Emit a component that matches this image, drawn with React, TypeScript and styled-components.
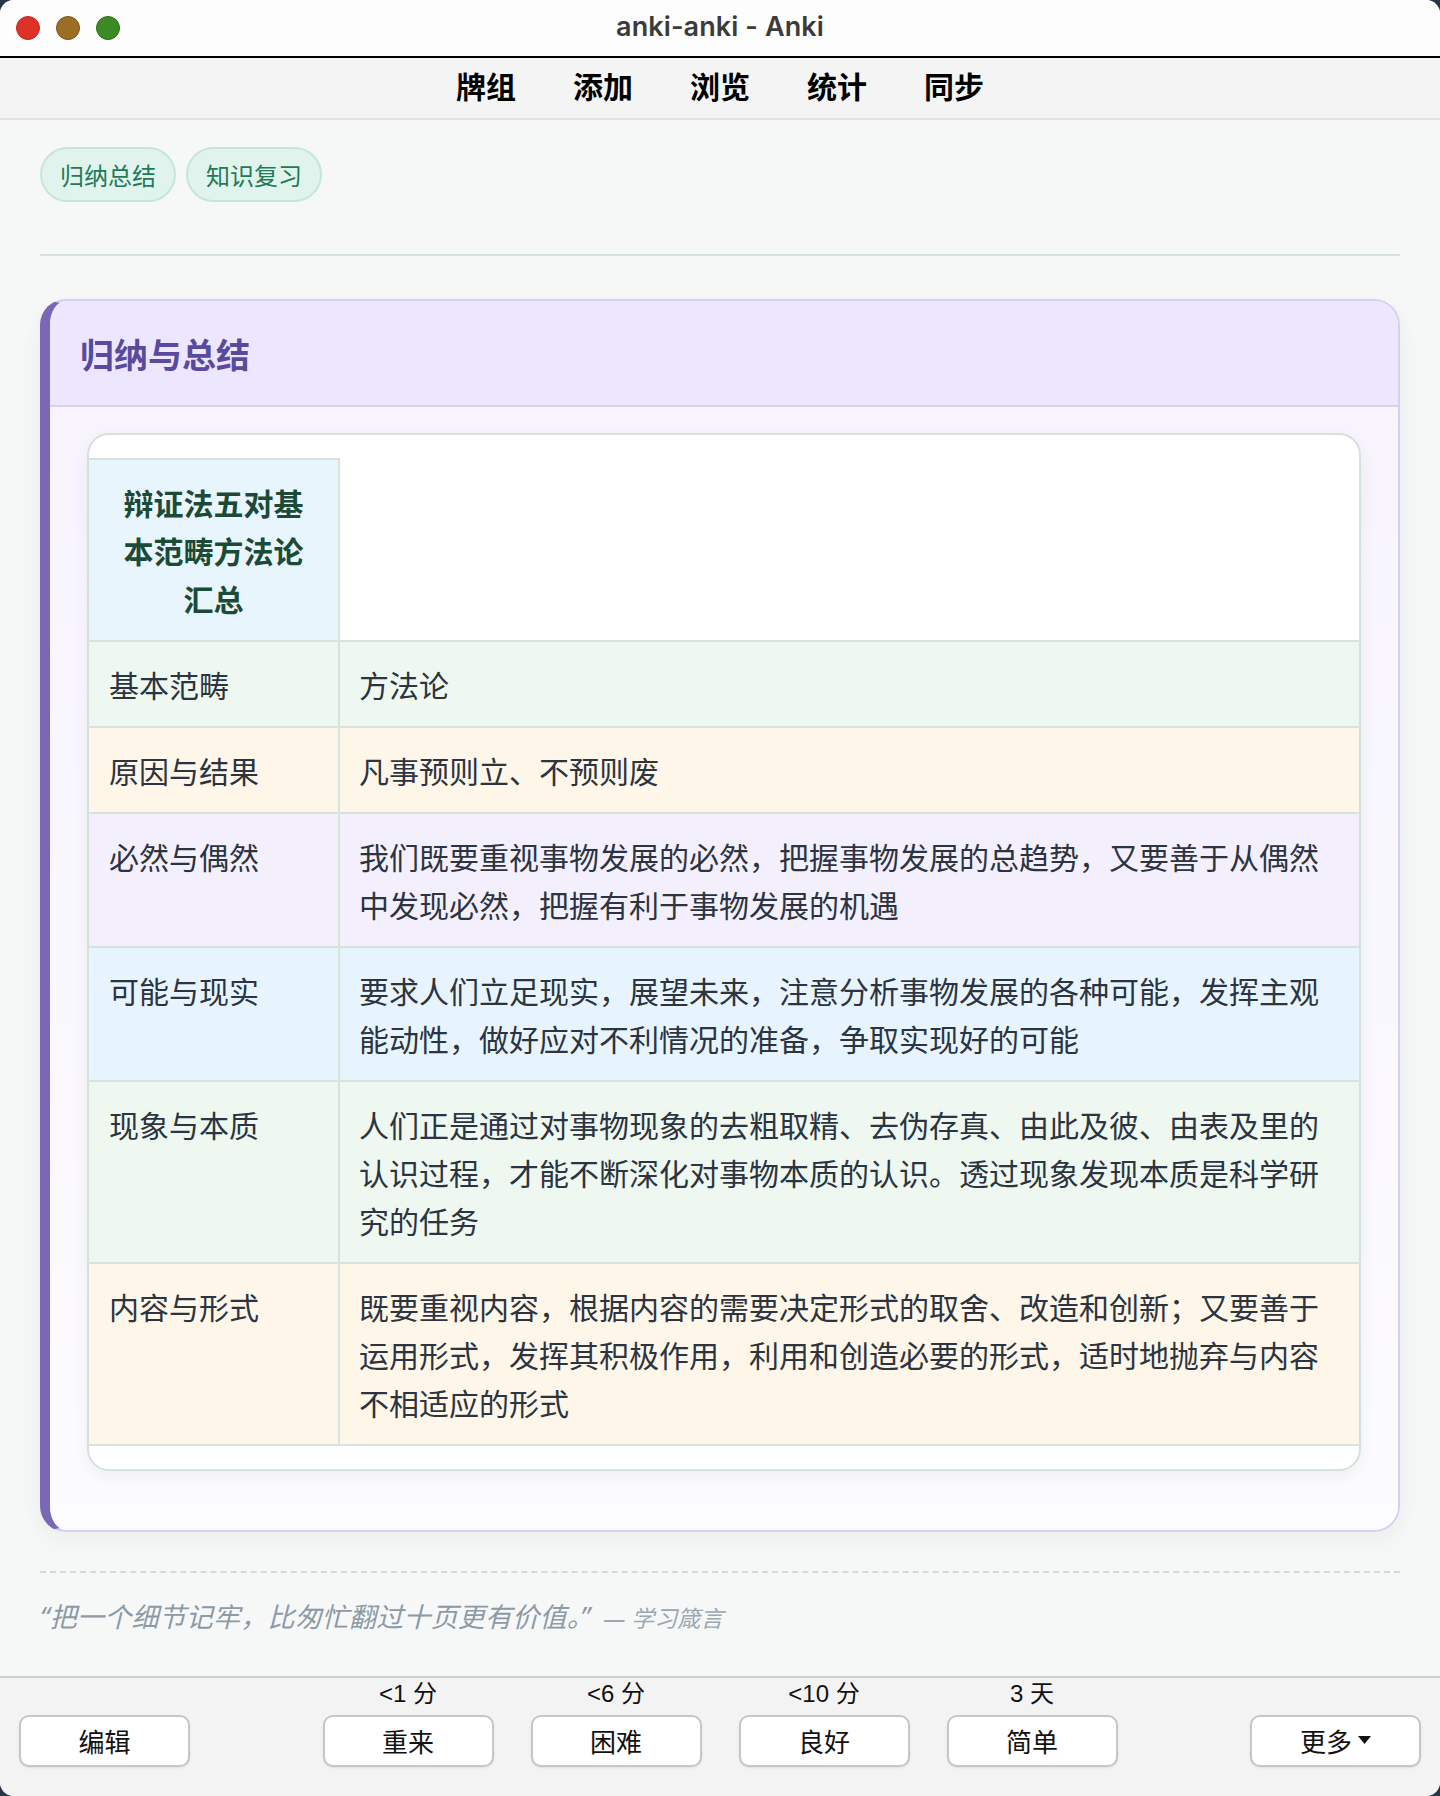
import React from "react";
import styled, { createGlobalStyle } from "styled-components";

const GlobalStyle = createGlobalStyle`
  html, body {
    margin: 0;
    padding: 0;
    background: #26364a;
  }
  body {
    font-family: "Noto Sans CJK SC", "Noto Sans", sans-serif;
  }
  * {
    box-sizing: border-box;
  }
`;

const Window = styled.div`
  width: 1440px;
  height: 1796px;
  display: flex;
  flex-direction: column;
  border-radius: 14px;
  overflow: hidden;
  background: #f6f8f7;
`;

const TitleBar = styled.div`
  height: 58px;
  padding-bottom: 3px;
  display: grid;
  grid-template-columns: 1fr auto 1fr;
  align-items: center;
  background: #fdfdfd;
  border-bottom: 2px solid #000;
`;

const Lights = styled.div`
  display: flex;
  gap: 16px;
  padding-left: 16px;
  padding-top: 3px;
`;

const Light = styled.span<{ $fill: string; $edge: string }>`
  width: 24px;
  height: 24px;
  border-radius: 50%;
  background: ${(p) => p.$fill};
  border: 1.5px solid ${(p) => p.$edge};
`;

const WindowTitle = styled.div`
  font-family: Inter, "Liberation Sans", sans-serif;
  font-weight: 600;
  font-size: 27px;
  color: #3b3b3b;
  letter-spacing: 0.1px;
`;

const NavBar = styled.nav`
  height: 62px;
  padding-bottom: 6px;
  display: flex;
  justify-content: center;
  align-items: center;
  gap: 57px;
  background: #f4f4f4;
  border-bottom: 2px solid #e2e2e2;
`;

const NavItem = styled.a`
  font-size: 30px;
  font-weight: 700;
  color: #000;
  text-decoration: none;
  line-height: 1;
`;

const Main = styled.main`
  flex: 1;
  padding: 27px 40px 0;
`;

const Tags = styled.div`
  display: flex;
  gap: 10px;
`;

const Tag = styled.span`
  height: 55px;
  padding: 0 18px;
  display: inline-flex;
  align-items: center;
  border-radius: 28px;
  border: 2px solid #c4e7d9;
  background: #e0f4ed;
  color: #1f7a57;
  font-size: 24px;
`;

const Divider = styled.hr`
  margin: 52px 0 0;
  border: none;
  height: 2px;
  background: #d6e2dd;
`;

const Card = styled.section`
  margin-top: 43px;
  border: 2px solid #d8cff0;
  border-left: 10px solid #7a68b6;
  border-radius: 26px;
  overflow: hidden;
  box-shadow: 0 8px 22px rgba(40, 40, 80, 0.05);
`;

const CardHeader = styled.header`
  height: 106px;
  display: flex;
  align-items: center;
  padding-left: 30px;
  background: #ece7fe;
  border-bottom: 2px solid #d8cff0;
`;

const CardTitle = styled.h2`
  margin: 0;
  font-size: 34px;
  font-weight: 700;
  color: #5a4a9d;
`;

const CardBody = styled.div`
  padding: 26px 37px 59px 37px;
  background: linear-gradient(180deg, #f7f4fe 0%, #fcfbff 100%);
`;

const TableBox = styled.div`
  background: #fff;
  border: 2px solid #d5e2dc;
  border-radius: 22px;
  padding: 23px 0;
  overflow: hidden;
  box-shadow: 0 6px 16px rgba(30, 50, 40, 0.06);
`;

const Table = styled.table`
  width: 100%;
  border-collapse: collapse;
  table-layout: fixed;
  font-size: 30px;
  line-height: 48px;
  color: #2b3440;
`;

const HeadCell = styled.th`
  padding: 18px 20px;
  background: #e8f5fd;
  color: #1b4a37;
  font-weight: 700;
  text-align: center;
  vertical-align: middle;
  border: 2px solid #d6e4dd;
  border-left: none;
`;

const Row = styled.tr<{ $bg: string }>`
  background: ${(p) => p.$bg};
`;

const Cell = styled.td`
  padding: 18px 20px;
  vertical-align: top;
  border: 2px solid #d6e4dd;
  &:first-child {
    border-left: none;
  }
  &:last-child {
    border-right: none;
    padding-left: 19px;
  }
`;

const Dashed = styled.div`
  margin-top: 39px;
  border-top: 2px dashed #d3dbd8;
`;

const Quote = styled.p`
  margin: 24px 0 0;
  font-family: "Noto Sans", "Noto Sans CJK SC", sans-serif;
  font-size: 27px;
  letter-spacing: 0.2px;
  line-height: 40px;
  font-style: italic;
  color: #8d9aa6;
`;

const Source = styled.span`
  margin-left: 13px;
  font-size: 23px;
  letter-spacing: 0;
  color: #9ba7b1;
`;

const BottomBar = styled.footer`
  height: 120px;
  display: grid;
  grid-template-columns: 1fr auto 1fr;
  align-items: end;
  padding: 0 19px 29px;
  background: #f3f3f3;
  border-top: 2px solid #cfcfcf;
`;

const Answers = styled.div`
  display: flex;
  gap: 37px;
`;

const Answer = styled.div`
  display: flex;
  flex-direction: column;
  align-items: center;
  gap: 6px;
`;

const Due = styled.span`
  font-family: "Liberation Sans", "Noto Sans CJK SC", sans-serif;
  font-size: 24px;
  line-height: 30px;
  color: #111;
`;

const Button = styled.button<{ $side?: "left" | "right" }>`
  width: 171px;
  height: 52px;
  justify-self: ${(p) => (p.$side === "right" ? "end" : "start")};
  display: inline-flex;
  align-items: center;
  justify-content: center;
  gap: 6px;
  background: #fff;
  border: 2px solid #c6c6c6;
  border-radius: 10px;
  box-shadow: 0 1px 2px rgba(0, 0, 0, 0.08);
  font-family: "Noto Sans CJK SC", sans-serif;
  font-size: 26px;
  color: #111;
  padding: 0 0 2px;
`;

const rows = [
  { k: "基本范畴", v: "方法论", bg: "#eef8f1" },
  { k: "原因与结果", v: "凡事预则立、不预则废", bg: "#fef6e8" },
  {
    k: "必然与偶然",
    v: "我们既要重视事物发展的必然，把握事物发展的总趋势，又要善于从偶然中发现必然，把握有利于事物发展的机遇",
    bg: "#f3effd",
  },
  {
    k: "可能与现实",
    v: "要求人们立足现实，展望未来，注意分析事物发展的各种可能，发挥主观能动性，做好应对不利情况的准备，争取实现好的可能",
    bg: "#e8f4fd",
  },
  {
    k: "现象与本质",
    v: "人们正是通过对事物现象的去粗取精、去伪存真、由此及彼、由表及里的认识过程，才能不断深化对事物本质的认识。透过现象发现本质是科学研究的任务",
    bg: "#eef8f1",
  },
  {
    k: "内容与形式",
    v: "既要重视内容，根据内容的需要决定形式的取舍、改造和创新；又要善于运用形式，发挥其积极作用，利用和创造必要的形式，适时地抛弃与内容不相适应的形式",
    bg: "#fef6e8",
  },
];

const answers = [
  { due: "<1 分", label: "重来" },
  { due: "<6 分", label: "困难" },
  { due: "<10 分", label: "良好" },
  { due: "3 天", label: "简单" },
];

export default function App() {
  return (
    <>
      <GlobalStyle />
      <Window>
        <TitleBar>
          <Lights>
            <Light $fill="#de3127" $edge="#c2271e" />
            <Light $fill="#9b6e24" $edge="#7a5417" />
            <Light $fill="#3b8a24" $edge="#2c6b1a" />
          </Lights>
          <WindowTitle>anki-anki - Anki</WindowTitle>
          <span />
        </TitleBar>
        <NavBar>
          {["牌组", "添加", "浏览", "统计", "同步"].map((n) => (
            <NavItem key={n}>{n}</NavItem>
          ))}
        </NavBar>
        <Main>
          <Tags>
            <Tag>归纳总结</Tag>
            <Tag>知识复习</Tag>
          </Tags>
          <Divider />
          <Card>
            <CardHeader>
              <CardTitle>归纳与总结</CardTitle>
            </CardHeader>
            <CardBody>
              <TableBox>
                <Table>
                  <colgroup>
                    <col style={{ width: 250 }} />
                    <col />
                  </colgroup>
                  <tbody>
                    <tr>
                      <HeadCell>辩证法五对基本范畴方法论汇总</HeadCell>
                    </tr>
                    {rows.map((r) => (
                      <Row key={r.k} $bg={r.bg}>
                        <Cell>{r.k}</Cell>
                        <Cell>{r.v}</Cell>
                      </Row>
                    ))}
                  </tbody>
                </Table>
              </TableBox>
            </CardBody>
          </Card>
          <Dashed />
          <Quote>
            “把一个细节记牢，比匆忙翻过十页更有价值。”
            <Source>— 学习箴言</Source>
          </Quote>
        </Main>
        <BottomBar>
          <Button>编辑</Button>
          <Answers>
            {answers.map((a) => (
              <Answer key={a.label}>
                <Due>{a.due}</Due>
                <Button>{a.label}</Button>
              </Answer>
            ))}
          </Answers>
          <Button $side="right">
            更多
            <svg width="13" height="8" viewBox="0 0 13 8">
              <path d="M0 0h13L6.5 8z" fill="#111" />
            </svg>
          </Button>
        </BottomBar>
      </Window>
    </>
  );
}
